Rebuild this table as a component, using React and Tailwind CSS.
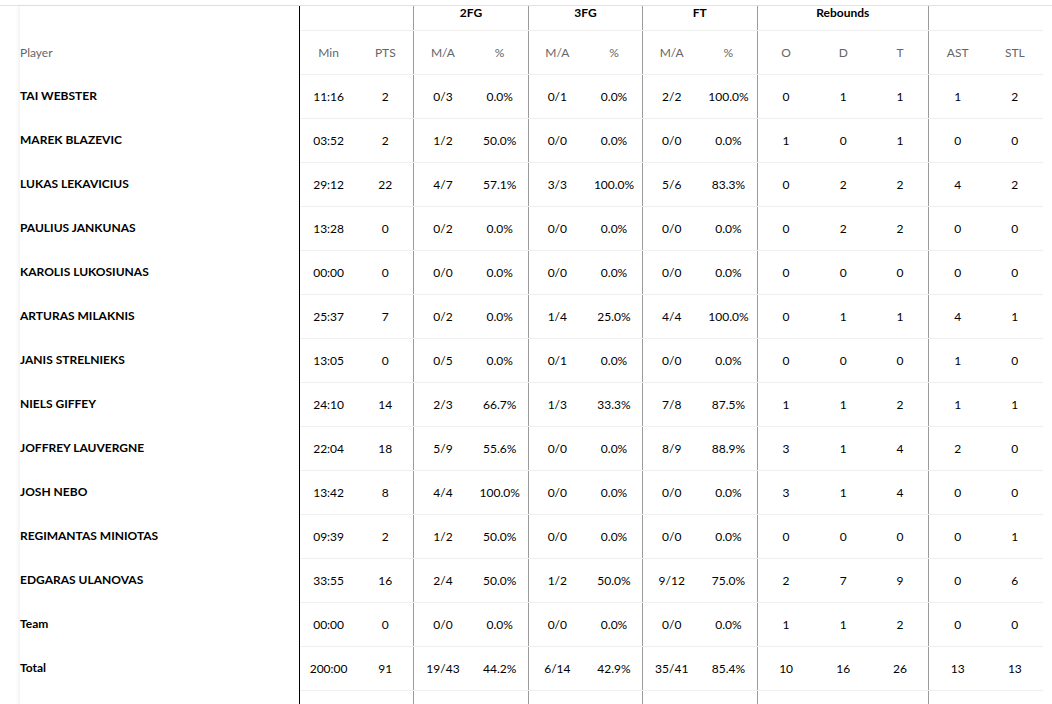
import React from "react";

const players = [
  ["TAI WEBSTER", "11:16", "2", "0/3", "0.0%", "0/1", "0.0%", "2/2", "100.0%", "0", "1", "1", "1", "2"],
  ["MAREK BLAZEVIC", "03:52", "2", "1/2", "50.0%", "0/0", "0.0%", "0/0", "0.0%", "1", "0", "1", "0", "0"],
  ["LUKAS LEKAVICIUS", "29:12", "22", "4/7", "57.1%", "3/3", "100.0%", "5/6", "83.3%", "0", "2", "2", "4", "2"],
  ["PAULIUS JANKUNAS", "13:28", "0", "0/2", "0.0%", "0/0", "0.0%", "0/0", "0.0%", "0", "2", "2", "0", "0"],
  ["KAROLIS LUKOSIUNAS", "00:00", "0", "0/0", "0.0%", "0/0", "0.0%", "0/0", "0.0%", "0", "0", "0", "0", "0"],
  ["ARTURAS MILAKNIS", "25:37", "7", "0/2", "0.0%", "1/4", "25.0%", "4/4", "100.0%", "0", "1", "1", "4", "1"],
  ["JANIS STRELNIEKS", "13:05", "0", "0/5", "0.0%", "0/1", "0.0%", "0/0", "0.0%", "0", "0", "0", "1", "0"],
  ["NIELS GIFFEY", "24:10", "14", "2/3", "66.7%", "1/3", "33.3%", "7/8", "87.5%", "1", "1", "2", "1", "1"],
  ["JOFFREY LAUVERGNE", "22:04", "18", "5/9", "55.6%", "0/0", "0.0%", "8/9", "88.9%", "3", "1", "4", "2", "0"],
  ["JOSH NEBO", "13:42", "8", "4/4", "100.0%", "0/0", "0.0%", "0/0", "0.0%", "3", "1", "4", "0", "0"],
  ["REGIMANTAS MINIOTAS", "09:39", "2", "1/2", "50.0%", "0/0", "0.0%", "0/0", "0.0%", "0", "0", "0", "0", "1"],
  ["EDGARAS ULANOVAS", "33:55", "16", "2/4", "50.0%", "1/2", "50.0%", "9/12", "75.0%", "2", "7", "9", "0", "6"],
  ["Team", "00:00", "0", "0/0", "0.0%", "0/0", "0.0%", "0/0", "0.0%", "1", "1", "2", "0", "0"],
  ["Total", "200:00", "91", "19/43", "44.2%", "6/14", "42.9%", "35/41", "85.4%", "10", "16", "26", "13", "13"],
];

const subHeads = ["Min", "PTS", "M/A", "%", "M/A", "%", "M/A", "%", "O", "D", "T", "AST", "STL"];

// column indexes whose right edge carries a group divider
const dividerAfter = [1, 3, 5, 7, 10];

const Cell = ({ i, children, className = "" }) => (
  <div
    className={
      "flex items-center justify-center " +
      (dividerAfter.includes(i) ? "border-r border-[#9b9b9b] " : "") +
      className
    }
  >
    {children}
  </div>
);

const App = () => {
  return (
    <div
      className="min-h-[704px] bg-white pt-[5px] text-[12px] text-black"
      style={{ fontFamily: "Lato, 'Open Sans', sans-serif" }}
    >
      <div className="flex border-t border-[#e2e2e2]">
        {/* player column */}
        <div className="ml-5 w-[280px] shrink-0 border-r border-black shadow-[-2px_0_3px_rgba(0,0,0,0.05)]">
          <div className="h-[25px]" />
          <div className="flex h-[44px] items-center text-[#666]">Player</div>
          {players.map((p) => (
            <div key={p[0]} className="flex h-[44px] items-center pb-[2px] font-bold">
              {p[0]}
            </div>
          ))}
          <div className="h-[44px]" />
        </div>

        {/* stats */}
        <div>
          <div className="grid h-[25px] grid-cols-[repeat(13,57.2px)] border-b border-[#efefef] font-bold leading-[14px]">
            <div className="col-span-2 border-r border-[#9b9b9b]" />
            <div className="col-span-2 border-r border-[#9b9b9b] text-center">2FG</div>
            <div className="col-span-2 border-r border-[#9b9b9b] text-center">3FG</div>
            <div className="col-span-2 border-r border-[#9b9b9b] text-center">FT</div>
            <div className="col-span-3 border-r border-[#9b9b9b] text-center">Rebounds</div>
            <div className="col-span-2" />
          </div>
          <div className="grid h-[44px] grid-cols-[repeat(13,57.2px)] border-b border-[#efefef] text-[#666]">
            {subHeads.map((h, i) => (
              <Cell key={i} i={i}>
                {h}
              </Cell>
            ))}
          </div>
          {players.map((p) => (
            <div
              key={p[0]}
              className="grid h-[44px] grid-cols-[repeat(13,57.2px)] border-b border-[#efefef]"
            >
              {p.slice(1).map((v, i) => (
                <Cell key={i} i={i}>
                  {v}
                </Cell>
              ))}
            </div>
          ))}
          <div className="grid h-[44px] grid-cols-[repeat(13,57.2px)]">
            {subHeads.map((_, i) => (
              <Cell key={i} i={i} />
            ))}
          </div>
        </div>
      </div>
    </div>
  );
};

export default App;
